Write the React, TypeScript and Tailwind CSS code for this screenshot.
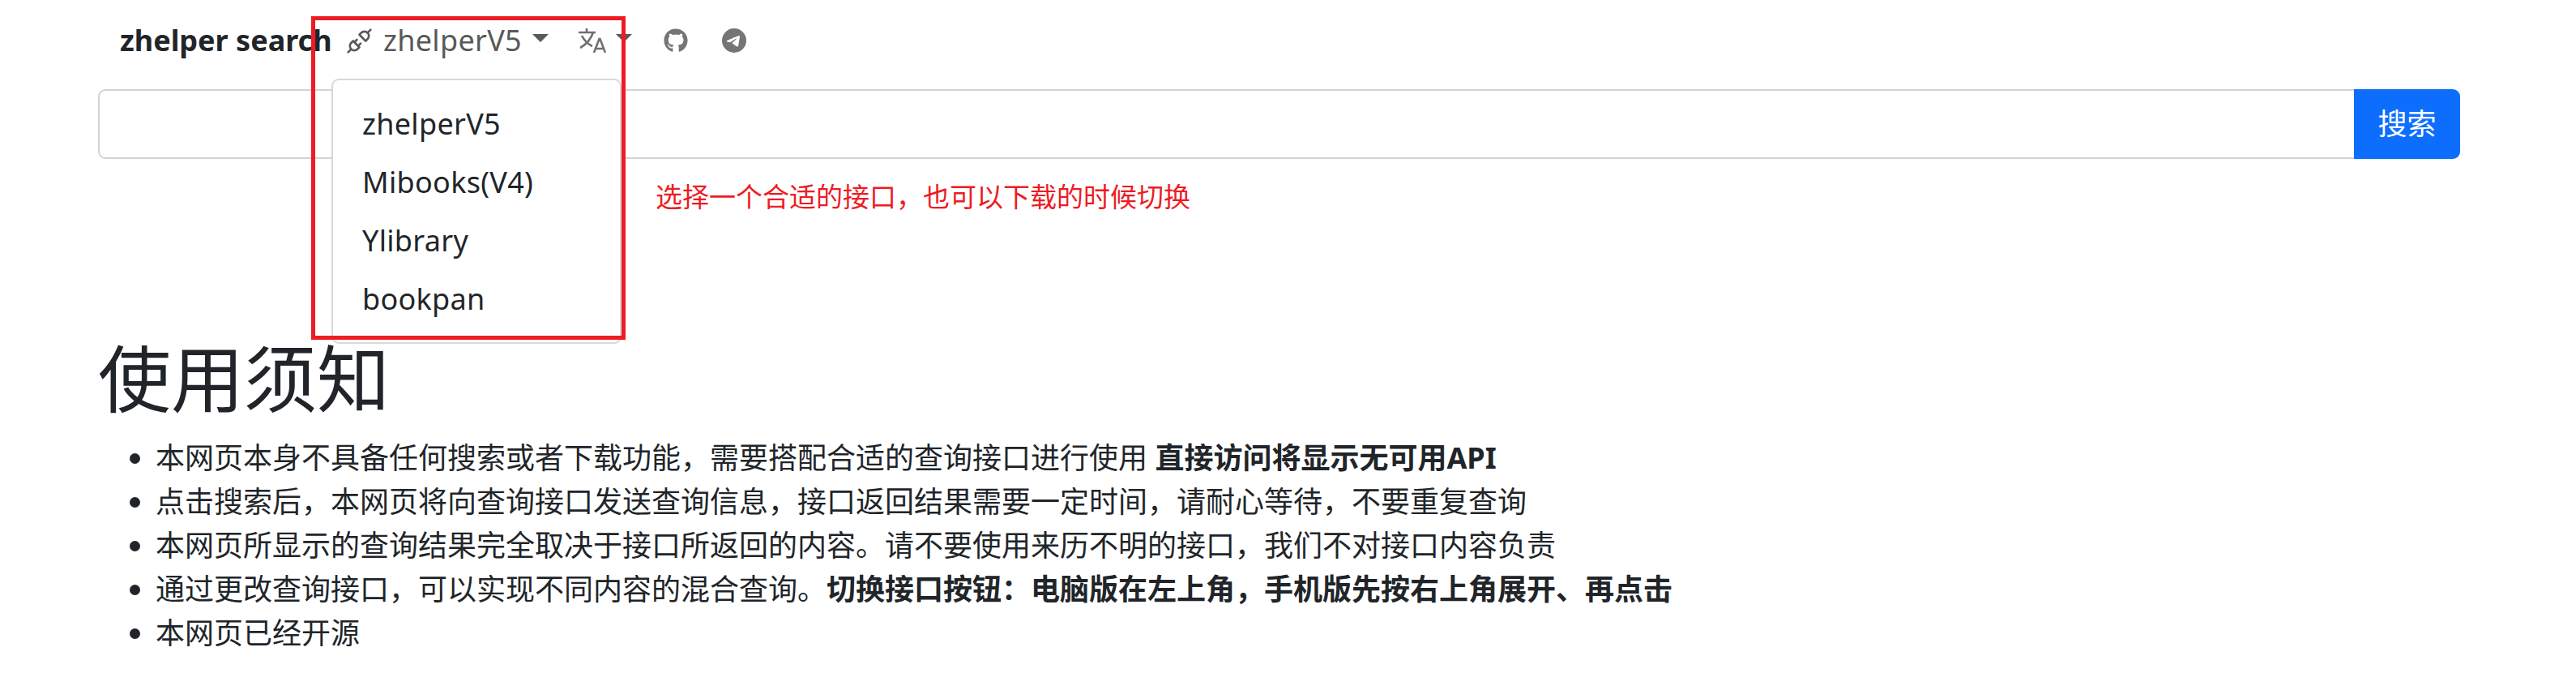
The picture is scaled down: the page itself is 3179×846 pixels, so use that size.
import { FaGithub } from "react-icons/fa";
import { BsTelegram } from "react-icons/bs";
import { TbPlugConnected } from "react-icons/tb";

const font = { fontFamily: '"Noto Sans","Noto Sans CJK SC",sans-serif' };

function Caret() {
  return <span className="block w-0 h-0 border-x-[10px] border-x-transparent border-t-[10px] border-t-[#595959]" />;
}

function TranslateIcon() {
  return (
    <svg viewBox="0 0 34 30" className="w-[34px] h-[30px]" fill="none" stroke="#707070" strokeWidth="2.6">
      <path d="M0 5h21M10 0v5M18 5C15 14 9 20 2 24M4 9c3 6 7 10 13 13" />
      <path d="M19 30l6.5-17h1L33 30M21 25h10" />
    </svg>
  );
}

const items = ["zhelperV5", "Mibooks(V4)", "Ylibrary", "bookpan"];

export default function App() {
  return (
    <div className="relative w-[3179px] h-[846px] bg-white overflow-hidden text-[36px] leading-[54px] text-[#212529]" style={font}>
      <div className="flex items-center h-[100px] pl-[148px]">
        <span className="font-bold w-[277px]">zhelper search</span>
        <div className="flex items-center text-[#595959]">
          <TbPlugConnected className="w-[37px] h-[37px] text-[#595959] mr-[11px]" strokeWidth={1.7} />
          <span className="tracking-[0.3px]">zhelperV5</span>
          <span className="ml-[13px] mb-[6px]"><Caret /></span>
          <span className="ml-[37px]"><TranslateIcon /></span>
          <span className="ml-[12px] mb-[6px]"><Caret /></span>
          <FaGithub className="w-[30px] h-[30px] text-[#757575] ml-[39px]" />
          <BsTelegram className="w-[30px] h-[30px] text-[#757575] ml-[42px]" />
        </div>
      </div>

      <div className="flex ml-[121px] w-[2915px] h-[86px] mt-[10px]">
        <div className="flex-1 border-2 border-r-0 border-[#ced4da] rounded-l-[9px] bg-white" />
        <div className="w-[131px] flex items-center justify-center bg-[#0d6efd] text-white rounded-r-[9px]">搜索</div>
      </div>

      <h1 className="ml-[121px] mt-[216px] text-[90px] leading-[108px] font-normal">使用须知</h1>

      <ul className="list-disc ml-[192px] mt-[18px]">
        <li>本网页本身不具备任何搜索或者下载功能，需要搭配合适的查询接口进行使用 <strong className="font-bold">直接访问将显示无可用API</strong></li>
        <li>点击搜索后，本网页将向查询接口发送查询信息，接口返回结果需要一定时间，请耐心等待，不要重复查询</li>
        <li>本网页所显示的查询结果完全取决于接口所返回的内容。请不要使用来历不明的接口，我们不对接口内容负责</li>
        <li>通过更改查询接口，可以实现不同内容的混合查询。<strong className="font-bold">切换接口按钮：电脑版在左上角，手机版先按右上角展开、再点击</strong></li>
        <li>本网页已经开源</li>
      </ul>

      <div className="absolute left-[409px] top-[97px] w-[358px] h-[327px] bg-white border-2 border-[#d9d9d9] rounded-[9px] py-[18px] tracking-[0.3px]">
        {items.map((t) => (
          <div key={t} className="px-[36px] py-[9px]">{t}</div>
        ))}
      </div>
      <div className="absolute left-[384px] top-[20px] w-[388px] h-[399px] border-[5px] border-[#ed1c24]" />
      <div className="absolute left-[809px] top-[218px] text-[33px] leading-[50px] text-[#ed1c24]">选择一个合适的接口，也可以下载的时候切换</div>
    </div>
  );
}
